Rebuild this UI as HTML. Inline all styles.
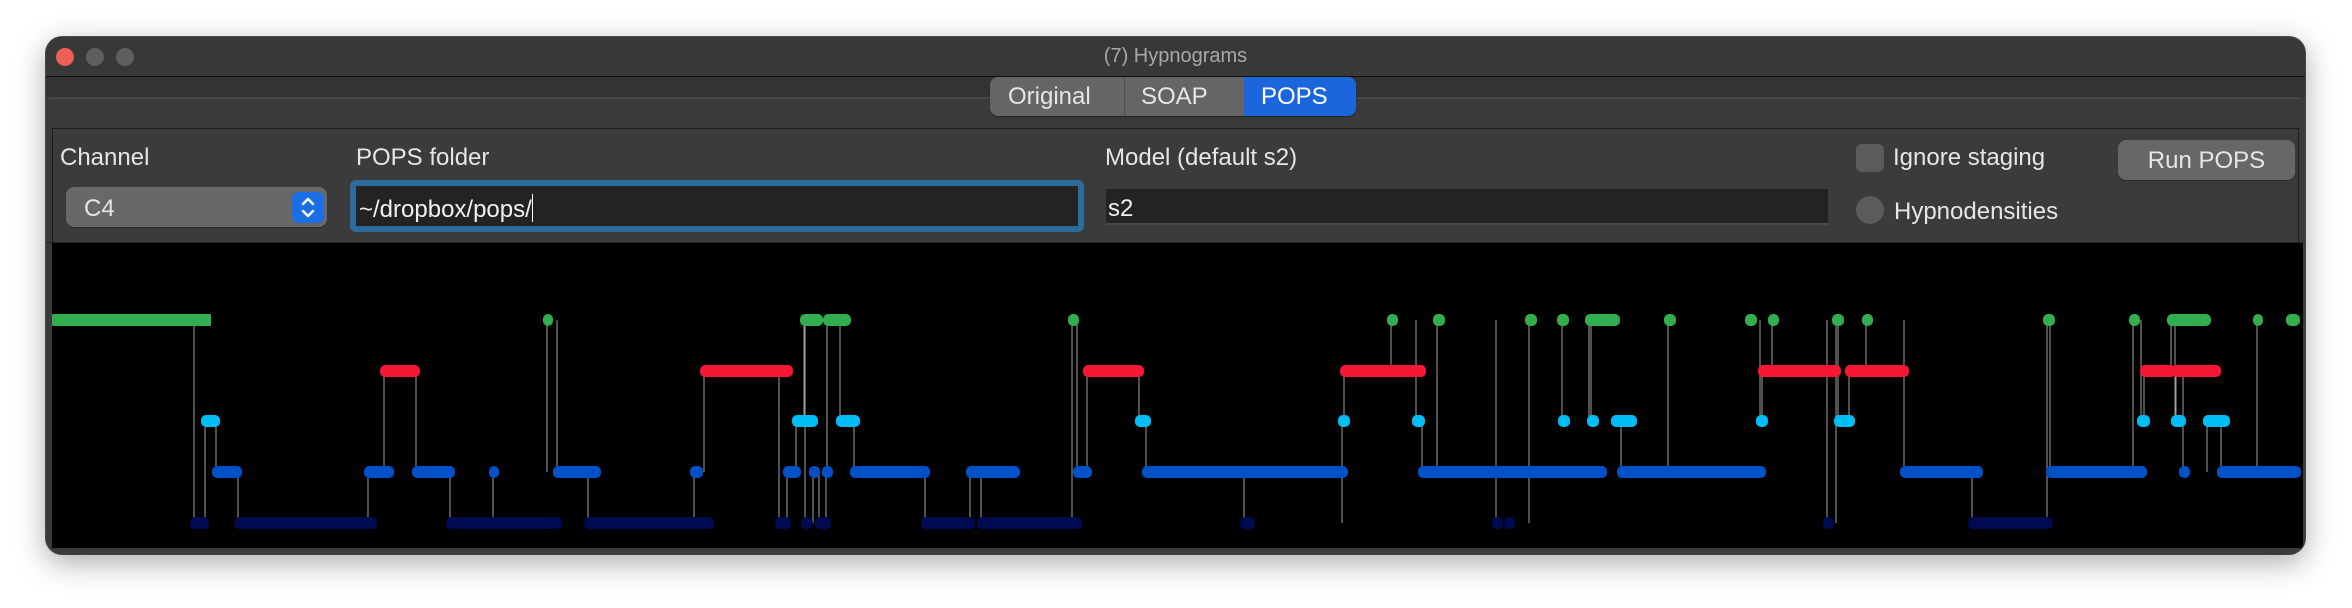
<!DOCTYPE html>
<html><head><meta charset="utf-8"><style>
html,body{margin:0;padding:0;background:#fff;width:2352px;height:608px;overflow:hidden;font-family:"Liberation Sans",sans-serif}
.a{position:absolute}
#win{left:46px;top:37px;width:2259px;height:517px;background:#3a3a3a;border-radius:16px;box-shadow:0 8px 30px rgba(0,0,0,.35),0 0 0 1px #555;overflow:hidden}
.t{color:#e6e6e6;font-size:24px;white-space:nowrap}
</style></head><body>
<div id="win" class="a">
  <div class="a" style="left:0;top:0;width:2259px;height:39px;background:#383838;border-bottom:1px solid #111"></div>
  <div class="a" style="left:10px;top:11px;width:18px;height:18px;border-radius:9px;background:#ec5f57"></div>
  <div class="a" style="left:40px;top:11px;width:18px;height:18px;border-radius:9px;background:#5e5e5e"></div>
  <div class="a" style="left:70px;top:11px;width:18px;height:18px;border-radius:9px;background:#5e5e5e"></div>
  <div class="a" style="left:0;width:2259px;top:8px;text-align:center;color:#a8a8a8;font-size:20px">(7) Hypnograms</div>
  <div class="a" style="left:0;top:40px;width:2259px;height:20px;background:#333"></div>
  <div class="a" style="left:1px;top:60px;width:2255px;height:60px;background:#3a3a3a;border-top:2px solid #474747;border-radius:6px 6px 0 0"></div>
  <!-- tabs -->
  <div class="a" style="left:944px;top:40px;width:366px;height:39px;border-radius:8px;background:#656565;overflow:hidden;box-shadow:0 1px 1px #222">
    <div class="a" style="left:134px;top:0;width:1px;height:39px;background:#4e4e4e"></div>
    <div class="a" style="left:254px;top:0;width:112px;height:39px;background:#1b66dc"></div>
    <div class="a t" style="left:18px;top:6px;">Original</div>
    <div class="a t" style="left:151px;top:6px;">SOAP</div>
    <div class="a t" style="left:271px;top:6px;color:#fff">POPS</div>
  </div>
  <!-- panel -->
  <div class="a" style="left:6px;top:91px;width:2245px;height:113px;background:#3b3b3b;border:1px solid #1e1e1e"></div>
  <div class="a t" style="left:14px;top:107px">Channel</div>
  <div class="a" style="left:20px;top:150px;width:261px;height:40px;border-radius:8px;background:#686868;box-shadow:0 1px 1px #2a2a2a"></div>
  <div class="a t" style="left:38px;top:158px">C4</div>
  <div class="a" style="left:246px;top:155px;width:32px;height:31px;border-radius:6px;background:#1c6fe3">
    <svg width="32" height="31" class="a" style="left:0;top:0"><path d="M11 12 L16 7 L21 12 M11 19 L16 24 L21 19" stroke="#fff" stroke-width="2.4" fill="none" stroke-linecap="round" stroke-linejoin="round"/></svg>
  </div>
  <div class="a t" style="left:310px;top:107px">POPS folder</div>
  <div class="a" style="left:304px;top:143px;width:722px;height:40px;border:6px solid #2b6c9c;border-radius:6px;background:#232323"></div>
  <div class="a t" style="left:313px;top:157px;color:#f0f0f0">~/dropbox/pops/<span style="display:inline-block;width:1px;height:28px;background:#fff;vertical-align:-5px"></span></div>
  <div class="a t" style="left:1059px;top:107px">Model (default s2)</div>
  <div class="a" style="left:1060px;top:152px;width:722px;height:34px;background:#232323;border-bottom:2px solid #4a4a4a"></div>
  <div class="a t" style="left:1062px;top:158px;color:#f0f0f0">s2</div>
  <div class="a" style="left:1810px;top:107px;width:28px;height:28px;border-radius:6px;background:#5b5b5b"></div>
  <div class="a t" style="left:1847px;top:107px">Ignore staging</div>
  <div class="a" style="left:1810px;top:159px;width:28px;height:28px;border-radius:14px;background:#5b5b5b"></div>
  <div class="a t" style="left:1848px;top:161px">Hypnodensities</div>
  <div class="a" style="left:2072px;top:103px;width:177px;height:40px;border-radius:8px;background:#676767;box-shadow:0 1px 1px #2a2a2a"></div>
  <div class="a t" style="left:2072px;top:110px;width:177px;text-align:center">Run POPS</div>
  <div class="a" style="left:0;top:205px;width:2259px;height:1px;background:#252525"></div>
  <!-- plot -->
  <div class="a" style="left:6px;top:206px;width:2251px;height:305px;background:#000"></div>
  <svg id="plot" class="a" style="left:0;top:0" width="2259" height="517"></svg>
</div>
<script>
var S=[[52,211,0],[190,209,4],[201,220,2],[212,242,3],[234,377,4],[364,394,3],[380,420,1],[412,455,3],[446,562,4],[489,499,3],[543,553,0],[553,601,3],[584,714,4],[690,703,3],[700,793,1],[775,791,4],[783,801,3],[792,818,2],[800,823,0],[801,813,4],[809,820,3],[815,831,4],[822,833,3],[823,851,0],[836,860,2],[850,930,3],[921,975,4],[966,1020,3],[977,1082,4],[1068,1079,0],[1073,1092,3],[1083,1144,1],[1135,1151,2],[1142,1348,3],[1240,1255,4],[1338,1350,2],[1340,1426,1],[1387,1398,0],[1412,1425,2],[1418,1607,3],[1433,1445,0],[1492,1503,4],[1504,1515,4],[1525,1537,0],[1557,1569,0],[1558,1570,2],[1585,1620,0],[1587,1599,2],[1611,1637,2],[1617,1766,3],[1664,1676,0],[1745,1757,0],[1756,1768,2],[1758,1841,1],[1768,1779,0],[1823,1834,4],[1832,1844,0],[1834,1855,2],[1845,1909,1],[1862,1873,0],[1900,1983,3],[1968,2053,4],[2043,2055,0],[2046,2147,3],[2129,2140,0],[2137,2150,2],[2140,2176,1],[2167,2211,0],[2171,2186,2],[2172,2221,1],[2179,2190,3],[2203,2230,2],[2217,2301,3],[2253,2263,0],[2286,2300,0]];
var Y=[320,371,421,472,523],C=["#32ad4f","#f71735","#00bdf5","#0050c8","#000a50"];
S.sort(function(a,b){return a[0]-b[0]});
var h="",ox=46,oy=37;
for(var i=1;i<S.length;i++){var x=S[i][0]+4-ox;h+='<line x1="'+x+'" x2="'+x+'" y1="'+(Y[S[i-1][2]]-oy)+'" y2="'+(Y[S[i][2]]-oy)+'" stroke="#a0a0a0" stroke-width="1"/>';}
for(var i=0;i<S.length;i++){var s=S[i];var w=Math.max(s[1]-s[0],9);h+='<rect x="'+(s[0]-ox)+'" y="'+(Y[s[2]]-oy-6)+'" width="'+w+'" height="12" rx="'+(s[0]<60?1:5)+'" fill="'+C[s[2]]+'"/>';}
document.getElementById("plot").innerHTML=h;
</script>
</body></html>
